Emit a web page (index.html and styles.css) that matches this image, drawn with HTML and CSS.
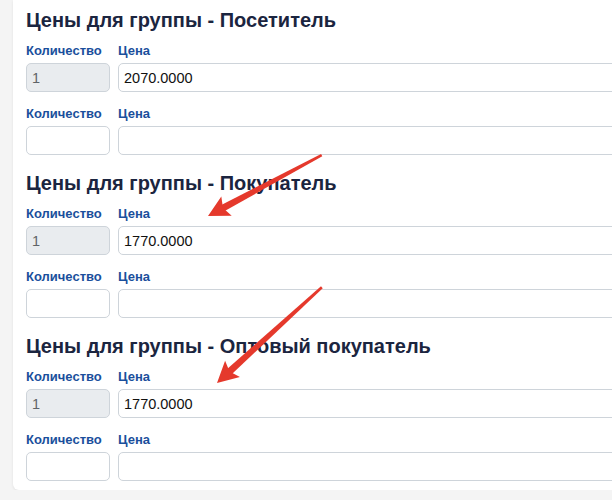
FILE: index.html
```html
<!DOCTYPE html>
<html>
<head>
    <title>Цены для групп</title>
    <link rel="stylesheet" href="styles.css">
</head>
<body>

<div class="page">
    <div class="card">

        <!-- Посетитель -->
        <div class="group">
            <h2>Цены для группы - Посетитель</h2>
            <div class="price-row">
                <label>Количество</label>
                <label>Цена</label>
                <input type="text" class="qty" value="1" disabled>
                <input type="text" value="2070.0000">
            </div>
            <div class="price-row">
                <label>Количество</label>
                <label>Цена</label>
                <input type="text" class="qty">
                <input type="text">
            </div>
        </div>

        <!-- Покупатель -->
        <div class="group">
            <h2>Цены для группы - Покупатель</h2>
            <div class="price-row">
                <label>Количество</label>
                <label>Цена</label>
                <input type="text" class="qty" value="1" disabled>
                <input type="text" value="1770.0000">
            </div>
            <div class="price-row">
                <label>Количество</label>
                <label>Цена</label>
                <input type="text" class="qty">
                <input type="text">
            </div>
        </div>

        <!-- Оптовый покупатель -->
        <div class="group">
            <h2>Цены для группы - Оптовый покупатель</h2>
            <div class="price-row">
                <label>Количество</label>
                <label>Цена</label>
                <input type="text" class="qty" value="1" disabled>
                <input type="text" value="1770.0000">
            </div>
            <div class="price-row">
                <label>Количество</label>
                <label>Цена</label>
                <input type="text" class="qty">
                <input type="text">
            </div>
        </div>

    </div>
</div>

<!-- red annotation arrows drawn over the form -->
<svg class="annotations" width="612" height="500" viewBox="0 0 612 500">
    <g transform="translate(208,216) rotate(-28.2)" fill="#e5392c">
        <polygon points="12,-3.6 129,-1.3 129,1.3 12,3.6"/>
        <polygon points="0,0 21,-11 17,0 21,11"/>
    </g>
    <g transform="translate(217,383) rotate(-42.4)" fill="#e5392c">
        <polygon points="12,-3.6 142,-1.3 142,1.3 12,3.6"/>
        <polygon points="0,0 21,-11 17,0 21,11"/>
    </g>
</svg>

</body>
</html>
```

FILE: styles.css
```css
body {
    margin: 0;
    background-color: #f4f4f4;
    font-family: "Liberation Sans", Arial, sans-serif;
    overflow: hidden;
}
.page {
    padding-left: 13px;
}
.card {
    width: 720px;
    background-color: #fff;
    padding: 8px 0 9px 13px;
    border-radius: 0 0 6px 6px;
    box-shadow: 0 1px 3px rgba(0, 0, 0, 0.08);
}
.group {
    margin-bottom: 16px;
}
.group:last-child {
    margin-bottom: 0;
}
h2 {
    margin: 0 0 10px;
    font-size: 20px;
    line-height: 24px;
    font-weight: bold;
    color: #1b2540;
}
.price-row {
    display: grid;
    grid-template-columns: 84px 1fr;
    column-gap: 8px;
    row-gap: 3px;
    margin-bottom: 13px;
}
.price-row:last-child {
    margin-bottom: 0;
}
label {
    font-size: 13px;
    line-height: 18px;
    font-weight: bold;
    color: #1a4f9c;
}
input[type="text"] {
    height: 29px;
    box-sizing: border-box;
    padding: 0 5px;
    border: 1px solid #ced4da;
    border-radius: 5px;
    background-color: #fff;
    font-family: "Liberation Sans", Arial, sans-serif;
    font-size: 14.5px;
    color: #111;
}
input.qty:disabled {
    background-color: #e9ecef;
    color: #5f6368;
}
.annotations {
    position: absolute;
    top: 0;
    left: 0;
    pointer-events: none;
}
```
